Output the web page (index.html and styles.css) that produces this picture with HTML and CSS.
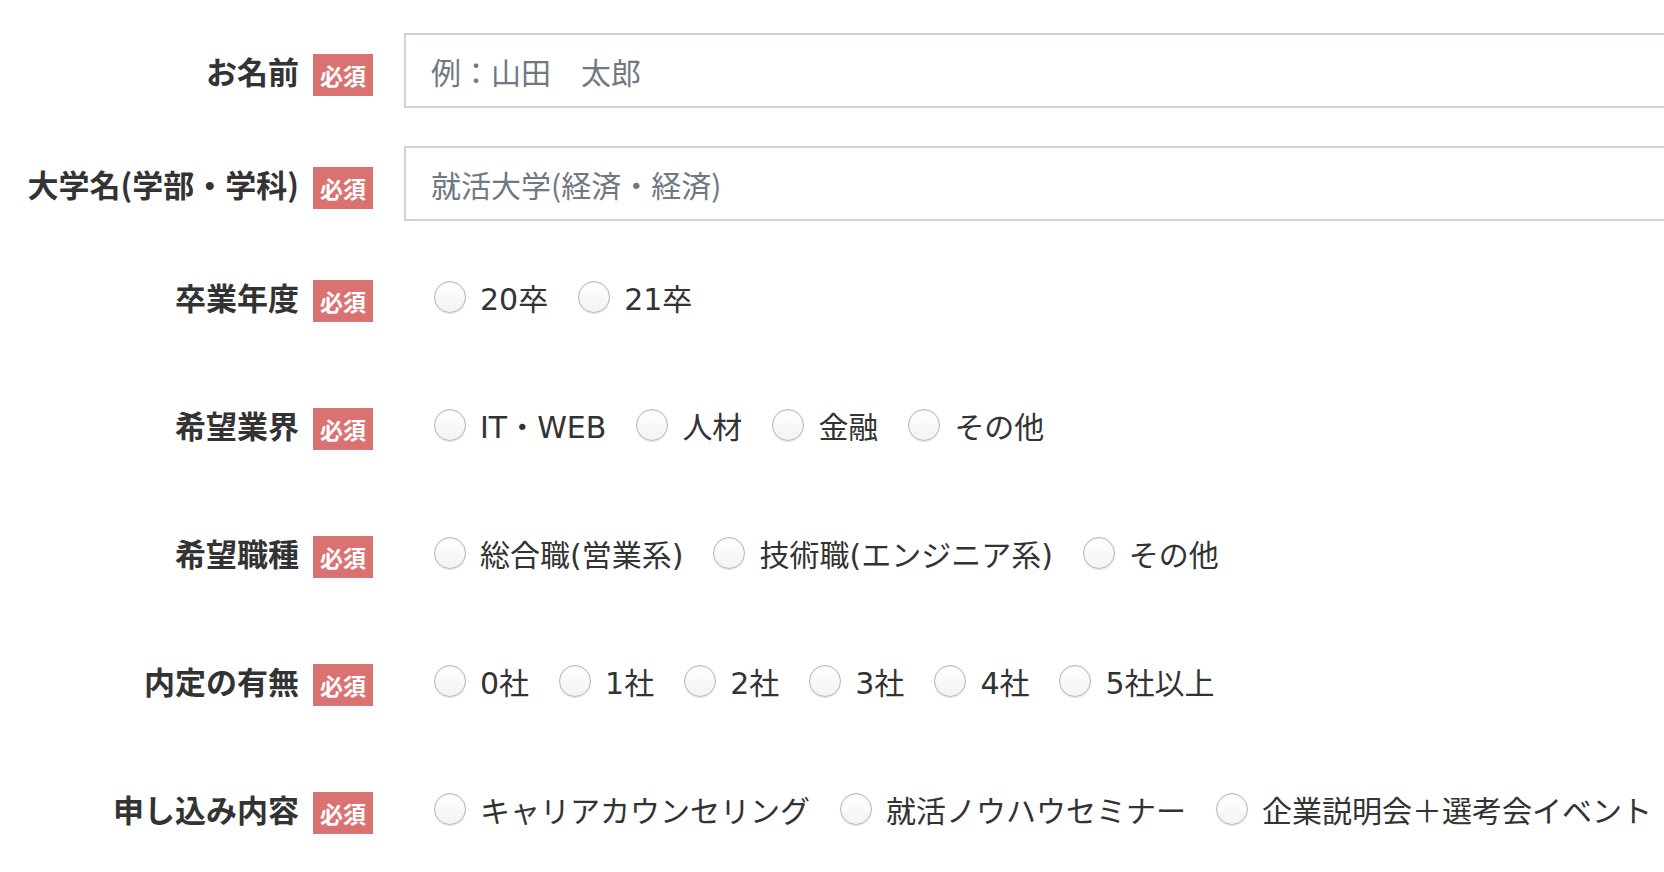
FILE: index.html
```html
<!DOCTYPE html>
<html lang="ja">
<head>
    <meta charset="UTF-8">
    <title>エントリーフォーム</title>
    <link rel="stylesheet" href="styles.css">
</head>
<body>
    <form class="entry-form">
        <div class="form-row">
            <div class="form-head"><span class="form-label">お名前</span><span class="req">必須</span></div>
            <div class="form-field"><input type="text" class="text-input" placeholder="例：山田　太郎"></div>
        </div>

        <div class="form-row">
            <div class="form-head"><span class="form-label">大学名(学部・学科)</span><span class="req">必須</span></div>
            <div class="form-field"><input type="text" class="text-input" placeholder="就活大学(経済・経済)"></div>
        </div>

        <div class="form-row form-row--choice">
            <div class="form-head"><span class="form-label">卒業年度</span><span class="req">必須</span></div>
            <div class="form-field choices">
                <label class="choice"><input type="radio" name="grad">20卒</label>
                <label class="choice"><input type="radio" name="grad">21卒</label>
            </div>
        </div>

        <div class="form-row form-row--choice">
            <div class="form-head"><span class="form-label">希望業界</span><span class="req">必須</span></div>
            <div class="form-field choices">
                <label class="choice"><input type="radio" name="industry">IT・WEB</label>
                <label class="choice"><input type="radio" name="industry">人材</label>
                <label class="choice"><input type="radio" name="industry">金融</label>
                <label class="choice"><input type="radio" name="industry">その他</label>
            </div>
        </div>

        <div class="form-row form-row--choice">
            <div class="form-head"><span class="form-label">希望職種</span><span class="req">必須</span></div>
            <div class="form-field choices">
                <label class="choice"><input type="radio" name="job">総合職(営業系)</label>
                <label class="choice"><input type="radio" name="job">技術職(エンジニア系)</label>
                <label class="choice"><input type="radio" name="job">その他</label>
            </div>
        </div>

        <div class="form-row form-row--choice">
            <div class="form-head"><span class="form-label">内定の有無</span><span class="req">必須</span></div>
            <div class="form-field choices">
                <label class="choice"><input type="radio" name="offer">0社</label>
                <label class="choice"><input type="radio" name="offer">1社</label>
                <label class="choice"><input type="radio" name="offer">2社</label>
                <label class="choice"><input type="radio" name="offer">3社</label>
                <label class="choice"><input type="radio" name="offer">4社</label>
                <label class="choice"><input type="radio" name="offer">5社以上</label>
            </div>
        </div>

        <div class="form-row form-row--choice">
            <div class="form-head"><span class="form-label">申し込み内容</span><span class="req">必須</span></div>
            <div class="form-field choices">
                <label class="choice"><input type="radio" name="apply">キャリアカウンセリング</label>
                <label class="choice"><input type="radio" name="apply">就活ノウハウセミナー</label>
                <label class="choice"><input type="radio" name="apply">企業説明会＋選考会イベント</label>
            </div>
        </div>
    </form>
</body>
</html>
```

FILE: styles.css
```css
html {
    overflow: hidden;
}

body {
    margin: 0;
    background: #fff;
    color: #333;
    font-family: "Noto Sans CJK JP", "Noto Sans", sans-serif;
}

.entry-form {
    width: 1720px;
    padding-top: 14px;
}

.form-row {
    display: flex;
    padding: 19px 0;
}

.form-row--choice {
    padding-bottom: 34px;
}

.form-head {
    width: 373px;
    height: 75px;
    flex-shrink: 0;
    display: flex;
    align-items: center;
    justify-content: flex-end;
}

.form-label {
    font-size: 31px;
    font-weight: 700;
    color: #333;
    white-space: nowrap;
}

.req {
    width: 60px;
    height: 42px;
    margin: 8px 0 0 14px;
    background: #da7271;
    color: #fff;
    font-size: 23px;
    font-weight: 700;
    line-height: 42px;
    text-align: center;
}

.form-field {
    flex: 1;
    margin-left: 31px;
}

.text-input {
    display: block;
    width: 100%;
    height: 75px;
    box-sizing: border-box;
    border: 2px solid #cfd3d7;
    border-radius: 0;
    padding: 0 25px;
    font-family: inherit;
    font-size: 30px;
    color: #333;
    outline: none;
}

.text-input::placeholder {
    color: #707981;
}

.choices {
    display: flex;
    align-items: center;
    height: 75px;
    padding-left: 30px;
}

.choice {
    display: flex;
    align-items: center;
    margin-right: 30px;
    font-family: "DejaVu Sans", "Noto Sans CJK JP", sans-serif;
    font-size: 30px;
    color: #333;
    white-space: nowrap;
}

.choice input {
    appearance: none;
    -webkit-appearance: none;
    width: 32px;
    height: 32px;
    margin: 0 14px 0 0;
    border: 1px solid #b8b8b8;
    border-radius: 50%;
    background: linear-gradient(#fff, #f3f3f3);
    box-shadow: inset 0 1px 1px rgba(0,0,0,0.08), 0 1px 1px rgba(0,0,0,0.12);
}
```
